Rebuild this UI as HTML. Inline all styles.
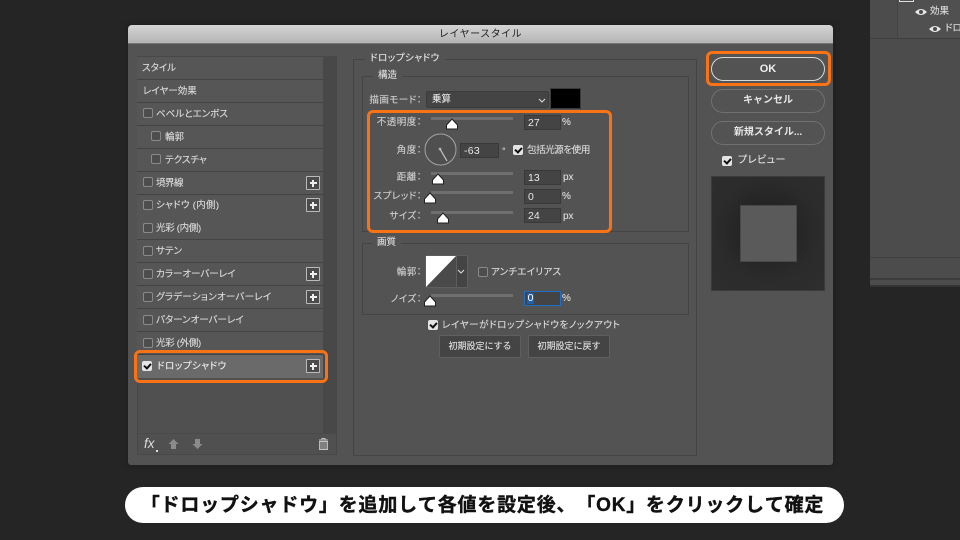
<!DOCTYPE html>
<html lang="ja"><head><meta charset="utf-8"><style>
html,body{margin:0;padding:0}
body{width:960px;height:540px;position:relative;overflow:hidden;background:#252525;font-family:"Liberation Sans","Noto Sans CJK JP",sans-serif;color:#dcdcdc;font-size:9.5px;-webkit-font-smoothing:antialiased}
div,span{position:absolute;box-sizing:border-box;white-space:nowrap}
svg{position:absolute;overflow:visible}
.row{left:137px;width:186px;height:23px;background:#565656;border-bottom:1.5px solid #434343}
.t{line-height:14px;font-feature-settings:"palt";-webkit-text-stroke:.12px currentColor}
.cb{width:10px;height:10px;margin-top:-1px;border:1px solid #8a8a8a;border-radius:2px;background:#4d4d4d}
.ck{width:10px;height:10px;background:#e4e4e4;border-radius:2px}
.ck:after{content:"";position:absolute;left:2px;top:1.5px;width:5px;height:3px;border-left:2px solid #111;border-bottom:2px solid #111;transform:rotate(-48deg)}
.plus{left:306px;width:14px;height:14px;border:1px solid #bbb;background:#4b4b4b;border-radius:1px}
.plus:before{content:"";position:absolute;left:2.5px;top:5px;width:7px;height:2px;background:#eee}
.plus:after{content:"";position:absolute;left:5px;top:2.5px;width:2px;height:7px;background:#eee}
.fs{border:1px solid #444;background:transparent}
.lg{background:#535353;padding:0 5px}
.inp{height:15px;background:#444;border:1px solid #393939;color:#e8e8e8;font-size:10.5px;line-height:14px;padding-left:3px}
.tr{left:431px;width:82px;height:3px;background:#6f6f6f}
.th{width:14px;height:12px}
.lb{text-align:right;color:#cfcfcf;letter-spacing:.5px}
.u{font-size:10px;line-height:12px}
.btn{border:1.5px solid #707070;border-radius:12px;text-align:center;color:#e6e6e6;font-weight:700;font-size:10px;height:24px;line-height:22.5px;left:711px;width:114px}
.b2{height:23px;top:335px;background:#444;border:1px solid #5f5f5f;border-radius:2px;text-align:center;line-height:21px;font-size:9px;width:82px;color:#e0e0e0;-webkit-text-stroke:.12px currentColor}
.o{border:3px solid #f97316;border-radius:6px}
</style></head><body>

<!-- right panel behind -->
<div style="left:870px;top:0;width:90px;height:287px;background:#4c4c4c;border-bottom:2px solid #333"></div>
<div style="left:870px;top:38px;width:90px;height:1px;background:#3e3e3e"></div>
<div style="left:897px;top:0;width:63px;height:38px;background:#505050;border-left:1px solid #444"></div>
<div style="left:870px;top:257px;width:90px;height:1px;background:#404040"></div>
<div style="left:870px;top:278px;width:90px;height:2px;background:#3c3c3c"></div>
<div style="left:899px;top:0;width:15px;height:2px;border:1px solid #ddd;border-top:0"></div>
<svg style="left:915px;top:8px" width="12" height="8" viewBox="0 0 12 8"><path d="M0 4Q6-2 12 4Q6 10 0 4Z" fill="#e8e8e8"/><circle cx="6" cy="4" r="2" fill="#4c4c4c"/></svg>
<div class="t" style="left:930px;top:5px;color:#ddd">効果</div>
<svg style="left:929px;top:25px" width="12" height="8" viewBox="0 0 12 8"><path d="M0 4Q6-2 12 4Q6 10 0 4Z" fill="#e8e8e8"/><circle cx="6" cy="4" r="2" fill="#4c4c4c"/></svg>
<div class="t" style="left:945px;top:22px;color:#ddd">ドロ</div>

<!-- dialog -->
<div style="left:128px;top:25px;width:705px;height:440px;background:#535353;border-radius:4px 4px 3px 3px;box-shadow:0 0 6px #1a1a1a"></div>
<div style="left:128px;top:25px;width:705px;height:19px;background:linear-gradient(#d4d4d4,#b4b4b4);border-radius:4px 4px 0 0;border-bottom:1px solid #777;text-align:center;color:#222;font-size:10px;line-height:20px;letter-spacing:.5px">レイヤースタイル</div>

<!-- style list -->
<div style="left:137px;top:56px;width:200px;height:399px;background:#505050;border:1px solid #484848"></div>
<div style="left:323px;top:57px;width:14px;height:376px;background:#484848"></div>

<div class="row" style="top:57px;height:23px"></div><div class="t" style="left:142px;top:62px">スタイル</div>
<div class="row" style="top:80px"></div><div class="t" style="left:143px;top:85px">レイヤー効果</div>
<div class="row" style="top:103px"></div><div class="cb" style="left:143px;top:109px"></div><div class="t" style="left:156px;top:108px">ベベルとエンボス</div>
<div class="row" style="top:126px"></div><div class="cb" style="left:151px;top:132px"></div><div class="t" style="left:165px;top:131px">輪郭</div>
<div class="row" style="top:149px"></div><div class="cb" style="left:151px;top:155px"></div><div class="t" style="left:165px;top:154px">テクスチャ</div>
<div class="row" style="top:172px"></div><div class="cb" style="left:143px;top:178px"></div><div class="t" style="left:156px;top:177px;letter-spacing:-.5px">境界線</div><div class="plus" style="top:176px"></div>
<div class="row" style="top:195px"></div><div class="cb" style="left:143px;top:201px"></div><div class="t" style="left:156px;top:199px;letter-spacing:.3px">シャドウ (内側)</div><div class="plus" style="top:198px"></div>
<div class="row" style="top:217px"></div><div class="cb" style="left:143px;top:224px"></div><div class="t" style="left:156px;top:222px;letter-spacing:-.3px">光彩 (内側)</div>
<div class="row" style="top:240px"></div><div class="cb" style="left:143px;top:247px"></div><div class="t" style="left:156px;top:245px">サテン</div>
<div class="row" style="top:263px"></div><div class="cb" style="left:143px;top:270px"></div><div class="t" style="left:156px;top:268px">カラーオーバーレイ</div><div class="plus" style="top:267px"></div>
<div class="row" style="top:286px"></div><div class="cb" style="left:143px;top:293px"></div><div class="t" style="left:156px;top:291px;letter-spacing:.25px">グラデーションオーバーレイ</div><div class="plus" style="top:290px"></div>
<div class="row" style="top:309px"></div><div class="cb" style="left:143px;top:316px"></div><div class="t" style="left:156px;top:314px">パターンオーバーレイ</div>
<div class="row" style="top:332px"></div><div class="cb" style="left:143px;top:339px"></div><div class="t" style="left:156px;top:337px;letter-spacing:-.3px">光彩 (外側)</div>
<div class="row" style="top:355px;height:23px;background:#6a6a6a;border:0"></div><div class="ck" style="left:142px;top:361px"></div><div class="t" style="left:157px;top:360px;color:#eee;letter-spacing:.5px">ドロップシャドウ</div><div class="plus" style="top:359px"></div>
<div class="o" style="left:134px;top:350px;width:194px;height:33px"></div>

<!-- list footer -->
<div style="left:138px;top:433px;width:198px;height:1px;background:#4a4a4a"></div>
<div style="left:144px;top:436px;font:italic 13.5px/16px 'Liberation Sans',sans-serif;color:#ddd">fx</div>
<div style="left:156px;top:450px;width:2px;height:1.5px;background:#ddd"></div>
<svg style="left:168px;top:438px" width="11" height="12" viewBox="0 0 11 12"><path d="M5.5 1L10.5 6H8V11H3V6H.5Z" fill="#8b8b8b"/></svg>
<svg style="left:192px;top:438px" width="11" height="12" viewBox="0 0 11 12"><path d="M5.5 11L10.5 6H8V1H3V6H.5Z" fill="#8b8b8b"/></svg>
<svg style="left:318px;top:438px" width="11" height="12" viewBox="0 0 11 12"><path d="M4 1.5V.5H7V1.5M1 2H10" stroke="#c4c4c4" fill="none"/><path d="M1.5 3.5H9.5V11.5H1.5Z" fill="#808080" stroke="#c4c4c4" stroke-width=".9"/></svg>

<!-- middle: drop shadow group -->
<div class="fs" style="left:353px;top:59px;width:344px;height:397px"></div>
<div class="lg t" style="left:365px;top:52px;color:#e4e4e4;letter-spacing:.5px">ドロップシャドウ</div>
<div class="fs" style="left:362px;top:76px;width:327px;height:156px"></div>
<div class="lg t" style="left:373px;top:69px">構造</div>

<div class="t lb" style="left:352px;width:70px;top:94px">描画モード：</div>
<div style="left:426px;top:91px;width:123px;height:17px;background:#444;border:1px solid #3c3c3c;border-radius:2px;line-height:15px;padding-left:5px;color:#e6e6e6" class="t">乗算</div>
<svg style="left:538px;top:98px" width="8" height="5" viewBox="0 0 8 5"><path d="M1 1L4 4L7 1" stroke="#ddd" fill="none" stroke-width="1"/></svg>
<div style="left:550px;top:88px;width:31px;height:21px;background:#000;border:1px solid #3a3a3a"></div>

<div class="t lb" style="left:352px;width:70px;top:116px">不透明度：</div>
<div class="tr" style="top:117px"></div>
<svg class="th" style="left:445px;top:118px" viewBox="0 0 14 12"><path d="M7 1L12.5 7V11H1.5V7Z" fill="#fff" stroke="#222" stroke-width="1"/></svg>
<div class="inp" style="left:524px;top:115px;width:37px">27</div>
<div class="t u" style="left:562px;top:117px">%</div>

<div class="t lb" style="left:352px;width:70px;top:144px">角度：</div>
<svg style="left:424px;top:133px" width="33" height="33" viewBox="0 0 33 33"><circle cx="16.5" cy="16.5" r="15.5" fill="#4f4f4f" stroke="#a4a4a4" stroke-width="1"/><circle cx="16" cy="16" r="1.4" fill="#a8a8a8"/><path d="M16 16L23 28" stroke="#c8c8c8" stroke-width="1.2"/></svg>
<div class="inp" style="left:460px;top:143px;width:39px;letter-spacing:.3px">-63</div>
<div class="t" style="left:502px;top:144px;font-size:9px">°</div>
<div class="ck" style="left:513px;top:145px"></div>
<div class="t" style="left:527px;top:144px;letter-spacing:-.4px">包括光源を使用</div>

<div class="t lb" style="left:352px;width:70px;top:171px">距離：</div>
<div class="tr" style="top:172px"></div>
<svg class="th" style="left:431px;top:173px" viewBox="0 0 14 12"><path d="M7 1L12.5 7V11H1.5V7Z" fill="#fff" stroke="#222" stroke-width="1"/></svg>
<div class="inp" style="left:524px;top:170px;width:37px">13</div>
<div class="t u" style="left:563px;top:172px">px</div>

<div class="t lb" style="left:352px;width:70px;top:190px">スプレッド：</div>
<div class="tr" style="top:191px"></div>
<svg class="th" style="left:423px;top:192px" viewBox="0 0 14 12"><path d="M7 1L12.5 7V11H1.5V7Z" fill="#fff" stroke="#222" stroke-width="1"/></svg>
<div class="inp" style="left:524px;top:189px;width:37px">0</div>
<div class="t u" style="left:562px;top:191px">%</div>

<div class="t lb" style="left:352px;width:70px;top:210px">サイズ：</div>
<div class="tr" style="top:211px"></div>
<svg class="th" style="left:436px;top:212px" viewBox="0 0 14 12"><path d="M7 1L12.5 7V11H1.5V7Z" fill="#fff" stroke="#222" stroke-width="1"/></svg>
<div class="inp" style="left:524px;top:208px;width:37px">24</div>
<div class="t u" style="left:563px;top:211px">px</div>

<div class="o" style="left:367px;top:110px;width:245px;height:123px;border-radius:6px"></div>

<!-- quality -->
<div class="fs" style="left:362px;top:243px;width:327px;height:72px"></div>
<div class="lg t" style="left:372px;top:236px">画質</div>
<div class="t lb" style="left:352px;width:70px;top:266px">輪郭：</div>
<div style="left:425px;top:255px;width:43px;height:33px;background:#444;border:1px solid #5e5e5e;border-radius:2px"></div>
<svg style="left:426px;top:256px" width="30" height="31" viewBox="0 0 30 31"><rect width="30" height="31" fill="#4a4a4a"/><path d="M0 31V0H30Z" fill="#fff"/></svg>
<div style="left:456px;top:256px;width:1px;height:31px;background:#5e5e5e"></div>
<svg style="left:457px;top:269px" width="8" height="5" viewBox="0 0 8 5"><path d="M1 1L4 4L7 1" stroke="#ddd" fill="none"/></svg>
<div class="cb" style="left:478px;top:268px;width:10px;height:10px"></div>
<div class="t" style="left:491px;top:266px;letter-spacing:.25px">アンチエイリアス</div>
<div class="t lb" style="left:352px;width:70px;top:293px">ノイズ：</div>
<div class="tr" style="top:294px"></div>
<svg class="th" style="left:423px;top:295px" viewBox="0 0 14 12"><path d="M7 1L12.5 7V11H1.5V7Z" fill="#fff" stroke="#222" stroke-width="1"/></svg>
<div style="left:524px;top:291px;width:37px;height:15px;background:#444;border:1px solid #1f6fc9"></div>
<div style="left:527px;top:293px;width:7px;height:11px;background:#1f5fae;color:#fff;font-size:10.5px;line-height:11px;text-align:center">0</div>
<div class="t u" style="left:562px;top:293px">%</div>

<div class="ck" style="left:428px;top:320px"></div>
<div class="t" style="left:442px;top:319px;letter-spacing:.6px">レイヤーがドロップシャドウをノックアウト</div>
<div class="b2" style="left:439px">初期設定にする</div>
<div class="b2" style="left:528px">初期設定に戻す</div>

<!-- right buttons -->
<div class="btn" style="top:57px;border-color:#d8d8d8;font-size:11px;line-height:22px;color:#f0f0f0">OK</div>
<div class="o" style="left:706px;top:51px;width:125px;height:35px"></div>
<div class="btn" style="top:89px">キャンセル</div>
<div class="btn" style="top:121px">新規スタイル...</div>
<div class="ck" style="left:722px;top:156px"></div>
<div class="t" style="left:738px;top:154px;font-size:10px;color:#e4e4e4;letter-spacing:.5px">プレビュー</div>
<div style="left:711px;top:176px;width:114px;height:115px;background:radial-gradient(circle at 50% 47%,#222 25%,#2b2b2b 60%,#2e2e2e);border:1px solid #3b3b3b"></div>
<div style="left:740px;top:205px;width:57px;height:57px;background:#5a5a5a;border:1px solid #484848"></div>

<!-- caption -->
<div style="left:125px;top:487px;width:719px;height:36px;background:#fff;border-radius:18px"></div>
<div style="left:132.5px;top:493px;width:700px;height:26px;color:#111;font-size:19px;font-weight:700;line-height:26px;text-align:center;-webkit-text-stroke:.4px #111;letter-spacing:.8px;text-spacing-trim:space-all;font-kerning:none">「ドロップシャドウ」を追加して各値を設定後、「OK」をクリックして確定</div>

</body></html>
